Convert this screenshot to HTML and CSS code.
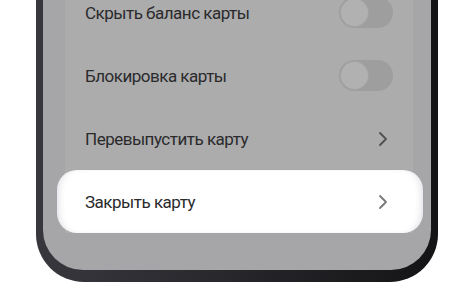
FILE: index.html
```html
<!DOCTYPE html>
<html lang="ru">
<head>
<meta charset="utf-8">
<link rel="stylesheet" href="styles.css">
</head>
<body>
<div class="phone">
  <div class="screen">
    <div class="panel">
      <div class="row">
        <span class="label">Скрыть баланс карты</span>
        <span class="toggle"><span class="knob"></span></span>
      </div>
      <div class="row">
        <span class="label">Блокировка карты</span>
        <span class="toggle"><span class="knob"></span></span>
      </div>
      <div class="row">
        <span class="label">Перевыпустить карту</span>
        <svg class="chev" width="12" height="16" viewBox="0 0 12 16"><path d="M3 2 L9 8 L3 14" fill="none" stroke="currentColor" stroke-width="1.8" stroke-linecap="round" stroke-linejoin="round"/></svg>
      </div>
      <div class="row active">
        <span class="label">Закрыть карту</span>
        <svg class="chev" width="12" height="16" viewBox="0 0 12 16"><path d="M3 2 L9 8 L3 14" fill="none" stroke="currentColor" stroke-width="1.8" stroke-linecap="round" stroke-linejoin="round"/></svg>
      </div>
    </div>
  </div>
</div>
</body>
</html>
```
FILE: styles.css
```css
html, body {
  margin: 0;
  padding: 0;
  background: #ffffff;
  width: 474px;
  height: 284px;
  overflow: hidden;
}

.phone {
  margin: -19px 0 0 36px;
  width: 402px;
  box-sizing: border-box;
  padding: 0 7px 12px 7px;
  background: linear-gradient(90deg, #37373d 0%, #2a2a2f 40%, #141416 100%);
  border-radius: 0 0 48px 48px;
}

.screen {
  background: #a6a6a9;
  border-radius: 0 0 40px 40px;
  padding: 0 18px 37px 22px;
}

.panel {
  background: #acacac;
  display: flex;
  flex-direction: column;
}

.row {
  height: 63px;
  display: flex;
  align-items: center;
  justify-content: space-between;
  padding: 0 20px 0 20px;
  font-family: Roboto, "Liberation Sans", sans-serif;
  font-size: 17px;
  letter-spacing: -0.5px;
  color: #2a2a2c;
}

.toggle {
  width: 54px;
  height: 31px;
  border-radius: 16px;
  background: #9e9e9f;
  display: flex;
  align-items: center;
  padding: 0 2px;
  box-sizing: border-box;
}

.knob {
  width: 27px;
  height: 27px;
  border-radius: 50%;
  background: #b1b1b1;
  box-shadow: 0 0 0 1px #a3a3a3;
}

.chev {
  color: #505052;
  margin-right: 4px;
}

.row.active {
  background: #ffffff;
  margin: 0 -10px 0 -8px;
  padding: 0 30px 0 28px;
  border-radius: 20px;
  box-shadow: inset 6px 0 6px -4px rgba(170, 170, 185, 0.35), inset -6px 0 6px -4px rgba(170, 170, 185, 0.35);
}

.row.active .chev {
  color: #78787a;
}
```
